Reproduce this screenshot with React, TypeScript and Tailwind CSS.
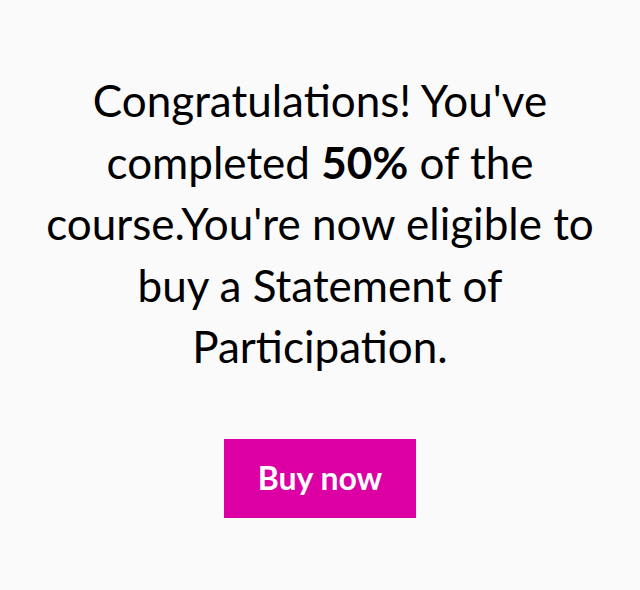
export default function App() {
  return (
    <div className="min-h-[590px] bg-[#fafafa] flex flex-col items-center px-[40px] pt-[70px]" style={{ fontFamily: 'Lato, "Noto Sans", sans-serif' }}>
      <p className="text-center text-black text-[44px] leading-[61.5px]">
        Congratulations! You've completed <strong className="font-bold">50%</strong> of the course.You're now eligible to buy a Statement of Participation.
      </p>
      <button className="mt-[61px] w-[192px] h-[79px] bg-[#dc00a4] text-white text-[32px] font-bold">
        Buy now
      </button>
    </div>
  );
}
